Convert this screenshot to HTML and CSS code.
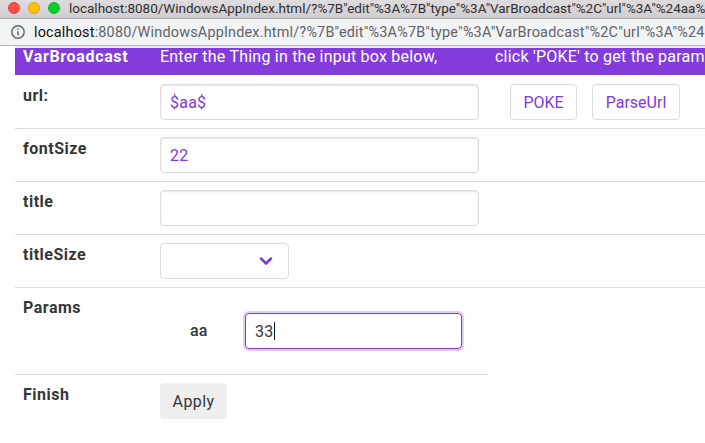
FILE: index.html
```html
<!DOCTYPE html>
<html lang="en">
<head>
<meta charset="utf-8">
<title>VarBroadcast</title>
<link rel="stylesheet" href="styles.css">
</head>
<body>
<header class="titlebar">
  <span class="light red"></span><span class="light yellow"></span><span class="light green"></span>
  <span class="window-title">localhost:8080/WindowsAppIndex.html/?%7B"edit"%3A%7B"type"%3A"VarBroadcast"%2C"url"%3A"%24aa%</span>
</header>
<div class="addressbar">
  <svg class="info" viewBox="0 0 14 14" width="14" height="14"><circle cx="7" cy="7" r="6.2" fill="none" stroke="#5f6368" stroke-width="1.4"/><path d="M7 6.2v4.1M7 3.5v1.5" stroke="#5f6368" stroke-width="1.5"/></svg>
  <span class="address"><b>localhost</b>:8080/WindowsAppIndex.html/?%7B"edit"%3A%7B"type"%3A"VarBroadcast"%2C"url"%3A"%24</span>
</div>
<main class="form">
  <div class="row head">
    <div class="name">VarBroadcast</div>
    <div class="field">Enter the Thing in the input box below,</div>
    <div class="hint">click 'POKE' to get the param</div>
  </div>
  <div class="row">
    <div class="name">url:</div>
    <div class="field"><div class="input">$aa$</div></div>
    <div class="actions"><button class="button outlined poke">POKE</button><button class="button outlined parse">ParseUrl</button></div>
  </div>
  <div class="row">
    <div class="name">fontSize</div>
    <div class="field"><div class="input">22</div></div>
  </div>
  <div class="row">
    <div class="name">title</div>
    <div class="field"><div class="input"></div></div>
  </div>
  <div class="row">
    <div class="name">titleSize</div>
    <div class="field"><div class="select"><svg width="14" height="10" viewBox="0 0 14 10"><path d="M2 2.5l5 5 5-5" fill="none" stroke="#8139db" stroke-width="2.5" stroke-linecap="round" stroke-linejoin="round"/></svg></div></div>
  </div>
  <div class="row params">
    <div class="name">Params</div>
    <div class="param"><span class="param-name">aa</span><div class="input focused">33<i class="caret"></i></div></div>
  </div>
  <div class="row last">
    <div class="name">Finish</div>
    <div class="field"><button class="button apply">Apply</button></div>
  </div>
</main>
</body>
</html>
```
FILE: styles.css
```css
* { box-sizing: border-box; }
body {
  margin: 0;
  height: 443px;
  overflow: hidden;
  background: #fff;
  color: #363636;
  font: 16px/24px Roboto, "Liberation Sans", sans-serif;
  letter-spacing: .22px;
}
.titlebar {
  display: flex;
  align-items: center;
  height: 19px;
  padding: 0 0 3px 8px;
  border-bottom: 1px solid #aeacae;
  background: linear-gradient(#dfdcdf, #d0cdd0);
  overflow: hidden;
}
.light {
  flex: none;
  width: 12px;
  height: 12px;
  margin-right: 8px;
  border: 1px solid;
  border-radius: 50%;
}
.red { background: #ff4d48; border-color: #e2443f; }
.yellow { background: #ffbf06; border-color: #e0a51b; }
.green { background: #05cf2d; border-color: #1bb631; }
.window-title {
  margin-left: 1px;
  padding-top: 1px;
  color: #302f30;
  font-size: 13.5px;
  letter-spacing: -.005px;
  line-height: 16px;
  white-space: nowrap;
}
.addressbar {
  display: flex;
  align-items: center;
  height: 27px;
  padding: 0 0 1px 11px;
  border-bottom: 1px solid #b5b5b6;
  background: #f1f3f5;
  overflow: hidden;
}
.info { flex: none; margin-right: 9px; }
.address { padding-top: 3px; color: #5f6368; font-size: 14.4px; letter-spacing: .2px; white-space: nowrap; }
.address b { color: #111; font-weight: 400; }
.form { margin-left: 15px; border-top: 2px solid #e8eaed; }
.row {
  display: flex;
  height: 53px;
  padding: 8px 0 8px 8px;
  border-bottom: 1px solid #dbdbdb;
}
.head {
  height: 27px;
  margin-bottom: 1px;
  padding-top: 0;
  border: 0;
  background: #833cdb;
  color: #fff;
  line-height: 17px;
  white-space: nowrap;
  overflow: hidden;
}
.name { flex: none; width: 137px; font-weight: 700; letter-spacing: .5px; }
.head .name { letter-spacing: .65px; }
.field { flex: none; width: 335px; }
.actions { display: flex; gap: 15px; padding-left: 15px; }
.input, .select {
  display: flex;
  align-items: center;
  width: 319px;
  height: 36px;
  padding: 2px 9px 0;
  border: 1px solid #dbdbdb;
  border-radius: 4px;
  color: #8139db;
  box-shadow: inset 0 1px 2px rgba(10, 10, 10, .1);
}
.select { width: 129px; justify-content: flex-end; padding: 0 15px 0 0; box-shadow: none; }
.button {
  height: 36px;
  padding: 2px 0 0;
  border: 1px solid #dbdbdb;
  border-radius: 4px;
  background: #fff;
  color: #8139db;
  font: inherit;
  letter-spacing: 0;
}
.poke { width: 67px; }
.parse { width: 88px; }
.apply { width: 67px; background: #eee; border-color: #eee; color: #363636; letter-spacing: .4px; }
.params { width: 473px; height: 87px; }
.param { display: flex; align-items: center; height: 70px; padding-left: 30px; }
.param-name { width: 55px; font-weight: 500; }
.input.focused {
  width: 217px;
  border-color: #8139db;
  box-shadow: 0 0 0 2px rgba(129, 57, 219, .25);
  color: #363636;
}
.caret { width: 1px; height: 18px; margin: -2px 0 0 1px; background: #111; }
.last { border: 0; }
```
